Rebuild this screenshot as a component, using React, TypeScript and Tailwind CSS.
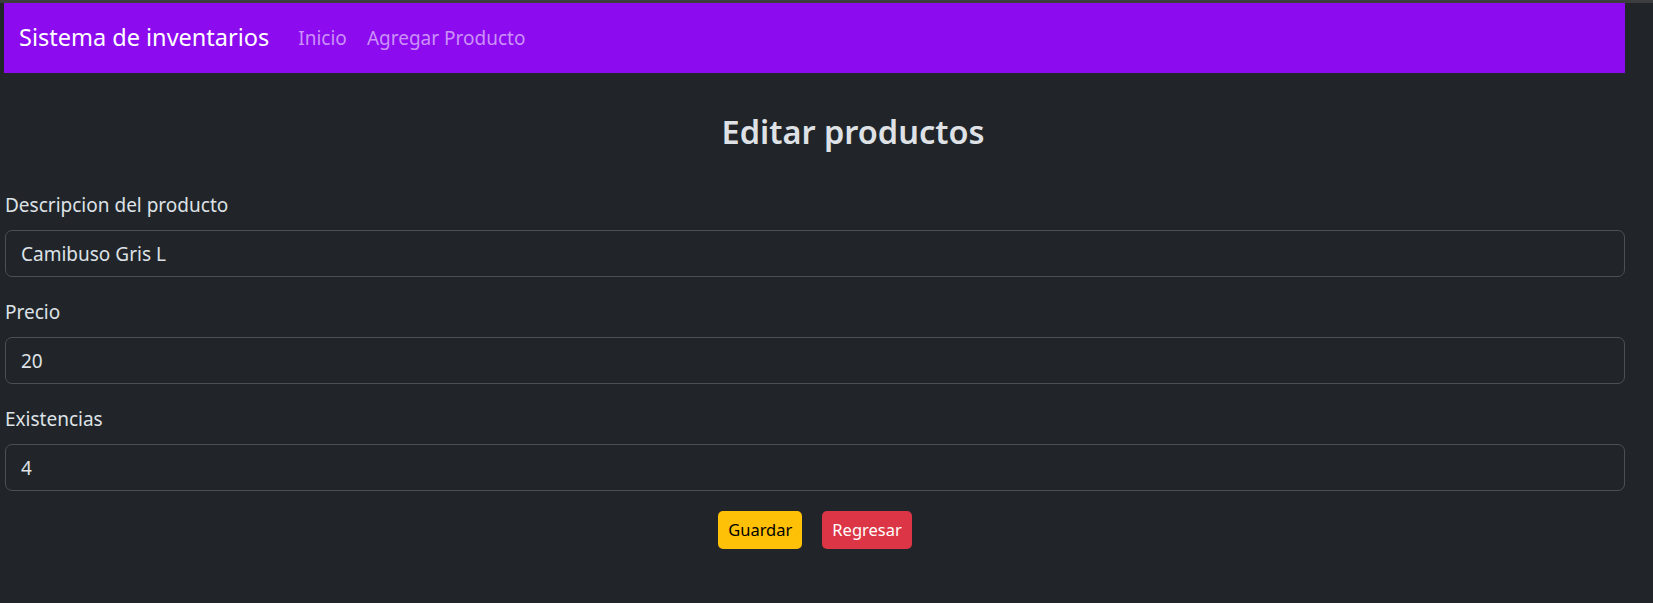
import React from 'react';

const campos = [
  { label: 'Descripcion del producto', valor: 'Camibuso Gris L' },
  { label: 'Precio', valor: '20' },
  { label: 'Existencias', valor: '4' },
];

export default function App() {
  return (
    <div className="min-h-screen bg-[#212529] text-[#dee2e6] font-['Noto_Sans','Open_Sans',sans-serif]">
      <div className="h-[3px] bg-[#3c3d3f]" />

      <div className="pl-[4px] pr-[28px]">
        <nav className="h-[70px] bg-[#8d0bef] flex items-center px-[15px]">
          <a className="text-[23.5px] text-white mr-[19px] leading-[1.5]">Sistema de inventarios</a>
          <a className="text-[19px] text-[#cb91f8] px-[10px]">Inicio</a>
          <a className="text-[19px] text-[#cb91f8] px-[10px]">Agregar Producto</a>
        </nav>
      </div>

      <div className="pl-[5px] pr-[28px]">
        <h3 className="text-center pl-[76px] text-[32.5px] font-semibold leading-[42px] mt-[38px] mb-[37px]">
          Editar productos
        </h3>

        <form>
          {campos.map((c) => (
            <div key={c.label} className="mb-[20px]">
              <label className="block text-[19px] leading-[30px] mb-[10px]">{c.label}</label>
              <input
                type="text"
                defaultValue={c.valor}
                className="w-full h-[47px] bg-[#212529] border border-[#495057] rounded-[7px] px-[15px] text-[19px] text-[#dee2e6] outline-none"
              />
            </div>
          ))}

          <div className="flex justify-center gap-[20px]">
            <button
              type="button"
              className="h-[38px] px-[10px] rounded-[5px] bg-[#ffc107] text-black text-[16.5px]"
            >
              Guardar
            </button>
            <button
              type="button"
              className="h-[38px] px-[10px] rounded-[5px] bg-[#dc3545] text-white text-[16.5px]"
            >
              Regresar
            </button>
          </div>
        </form>
      </div>
    </div>
  );
}
